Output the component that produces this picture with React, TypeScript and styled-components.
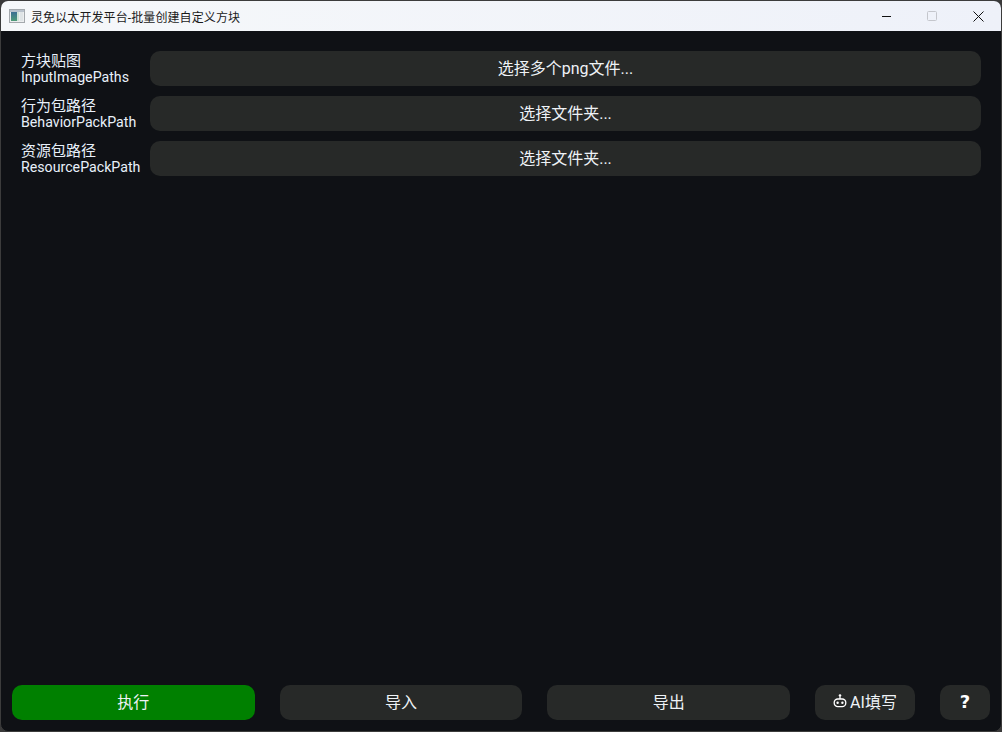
import React from 'react'
import styled, { createGlobalStyle } from 'styled-components'

const GlobalStyle = createGlobalStyle`
  html, body {
    margin: 0;
    padding: 0;
    background: #3a3a3a;
    overflow: hidden;
  }
  * {
    box-sizing: border-box;
  }
`

const FONT = `Roboto, "Noto Sans CJK SC", "Noto Sans", sans-serif`

const Window = styled.div`
  width: 1002px;
  height: 732px;
  display: flex;
  flex-direction: column;
  border: 1px solid #3c3c3c;
  border-radius: 8px;
  overflow: hidden;
  background: #0f1115;
  font-family: ${FONT};
`

const TitleBar = styled.div`
  height: 30px;
  flex: none;
  display: flex;
  align-items: center;
  padding-left: 8px;
  background: linear-gradient(90deg, #f6f8fa 0%, #eef1f9 100%);
`

const AppIcon = styled.svg`
  width: 16px;
  height: 16px;
  flex: none;
`

const Title = styled.div`
  margin-left: 6px;
  font-size: 12px;
  letter-spacing: 0.1px;
  color: #1a1a1a;
  white-space: nowrap;
  flex: 1;
`

const WinButton = styled.div`
  width: 46px;
  height: 30px;
  display: flex;
  align-items: center;
  justify-content: center;
`

const Body = styled.div`
  flex: 1;
  display: flex;
  flex-direction: column;
  gap: 10px;
  padding: 20px 20px 0 20px;
`

const Row = styled.div`
  display: flex;
  align-items: center;
  height: 35px;
`

const Label = styled.div`
  width: 129px;
  flex: none;
  display: flex;
  flex-direction: column;
  font-size: 15px;
  line-height: 16px;
  color: #e8f0fa;
  white-space: nowrap;
`

const LabelEn = styled.span`
  font-size: 14.2px;
`

const Button = styled.div<{ $green?: boolean; $width?: number }>`
  height: 35px;
  padding-bottom: 3px;
  display: flex;
  align-items: center;
  justify-content: center;
  gap: 3px;
  border-radius: 10px;
  font-size: 16px;
  color: #eef2f6;
  white-space: nowrap;
  background: ${(props) => (props.$green ? '#008000' : '#272928')};
  flex: ${(props) => (props.$width ? `0 0 ${props.$width}px` : '1')};
`

const Footer = styled.div`
  flex: none;
  display: flex;
  gap: 25px;
  padding: 0 11px 11px 11px;
`

const Help = styled.span`
  font-family: "DejaVu Sans", sans-serif;
  font-weight: 700;
  font-size: 18px;
  color: #fff;
`

const rows = [
  { zh: '方块贴图', en: 'InputImagePaths', action: '选择多个png文件...' },
  { zh: '行为包路径', en: 'BehaviorPackPath', action: '选择文件夹...' },
  { zh: '资源包路径', en: 'ResourcePackPath', action: '选择文件夹...' },
]

export default function App() {
  return (
    <Window>
      <GlobalStyle />
      <TitleBar>
        <AppIcon viewBox="0 0 16 16">
          <defs>
            <linearGradient id="appIconPane" x1="0" y1="0" x2="0" y2="1">
              <stop offset="0" stopColor="#3d6f93" />
              <stop offset="1" stopColor="#4f9c78" />
            </linearGradient>
          </defs>
          <rect x="0.5" y="1.5" width="15" height="13" fill="#eceeef" stroke="#a4a9ad" />
          <rect x="1" y="2" width="14" height="2" fill="#b9c2cc" />
          <rect x="2" y="4" width="6" height="9" fill="url(#appIconPane)" />
          <rect x="8" y="4" width="2" height="9" fill="#cfe3d6" />
          <rect x="11" y="4" width="3" height="9" fill="#dfe4e6" />
        </AppIcon>
        <Title>灵免以太开发平台-批量创建自定义方块</Title>
        <WinButton>
          <svg width="10" height="10" viewBox="0 0 10 10">
            <path d="M1 5.5H11" stroke="#111" strokeWidth="1" />
          </svg>
        </WinButton>
        <WinButton>
          <svg width="10" height="10" viewBox="0 0 10 10">
            <rect x="0.5" y="0.5" width="9" height="9" rx="1" fill="none" stroke="#c4c6cc" />
          </svg>
        </WinButton>
        <WinButton>
          <svg width="11" height="11" viewBox="0 0 11 11">
            <path d="M0.5 0.5L10.5 10.5M10.5 0.5L0.5 10.5" stroke="#111" strokeWidth="1" />
          </svg>
        </WinButton>
      </TitleBar>
      <Body>
        {rows.map((row) => (
          <Row key={row.en}>
            <Label>
              <span>{row.zh}</span>
              <LabelEn>{row.en}</LabelEn>
            </Label>
            <Button>{row.action}</Button>
          </Row>
        ))}
      </Body>
      <Footer>
        <Button $green>执行</Button>
        <Button>导入</Button>
        <Button>导出</Button>
        <Button $width={100}>
          <svg width="14" height="14" viewBox="0 0 14 14" fill="none" stroke="#fff" strokeWidth="1.3">
            <circle cx="7" cy="1.5" r="1.3" fill="#fff" stroke="none" />
            <path d="M7 2.5V5" />
            <rect x="1.2" y="5" width="11.6" height="7.6" rx="3.6" />
            <rect x="3.4" y="7.6" width="2.4" height="2.4" rx="1.2" fill="#fff" stroke="none" />
            <rect x="8.2" y="7.6" width="2.4" height="2.4" rx="1.2" fill="#fff" stroke="none" />
          </svg>
          AI填写
        </Button>
        <Button $width={50}>
          <Help>?</Help>
        </Button>
      </Footer>
    </Window>
  )
}
